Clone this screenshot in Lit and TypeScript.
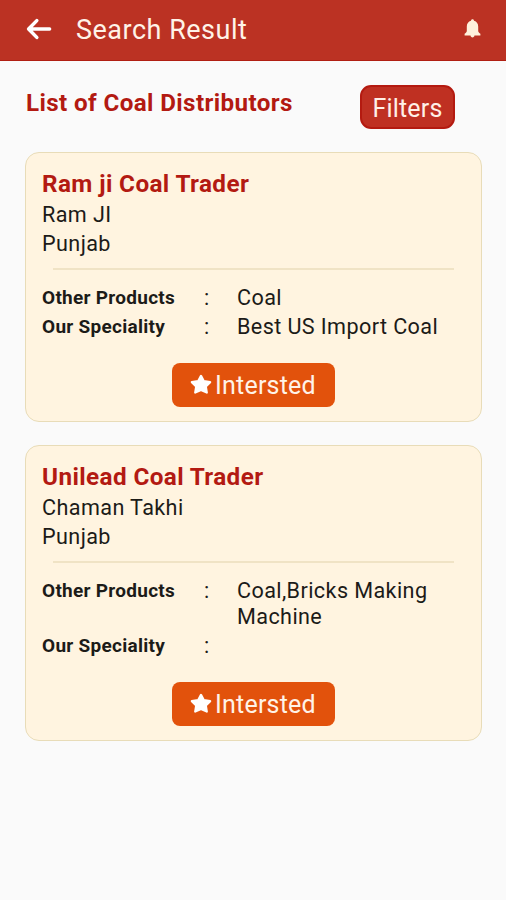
import { LitElement, html, css, svg } from "lit";
import { customElement, property } from "lit/decorators.js";

interface Distributor {
  company: string;
  contact: string;
  region: string;
  products: string;
  speciality: string;
}

const distributors: Distributor[] = [
  {
    company: "Ram ji Coal Trader",
    contact: "Ram JI",
    region: "Punjab",
    products: "Coal",
    speciality: "Best US Import Coal",
  },
  {
    company: "Unilead Coal Trader",
    contact: "Chaman Takhi",
    region: "Punjab",
    products: "Coal,Bricks Making Machine",
    speciality: "",
  },
];

const backIcon = svg`<path d="M11.8 2.6 L3.6 11 L11.8 19.4 M3.8 11 H24.6" fill="none" stroke="currentColor" stroke-width="3.5" stroke-linecap="round" stroke-linejoin="round"/>`;
const bellIcon = svg`<path d="M8.5 0.3 C9.4 0.3 10 0.9 10 1.8 C12.8 2.6 14.2 4.9 14.2 7.6 V12 C14.2 13.2 15.4 13.9 16.4 14.8 V16.4 H0.6 V14.8 C1.6 13.9 2.8 13.2 2.8 12 V7.6 C2.8 4.9 4.2 2.6 7 1.8 C7 0.9 7.6 0.3 8.5 0.3 Z M6.5 16.2 H10.5 C10.5 17.6 9.6 18.4 8.5 18.4 C7.4 18.4 6.5 17.6 6.5 16.2 Z" fill="currentColor"/>`;
const starIcon = svg`<path d="M11 1.9 L13.9 7.2 L20.2 8.1 L15.8 12.5 L16.8 18.6 L11 15.9 L5.2 18.6 L6.2 12.5 L1.8 8.1 L8.1 7.2 Z" fill="currentColor" stroke="currentColor" stroke-width="2.2" stroke-linejoin="round"/>`;

@customElement("distributor-card")
export class DistributorCard extends LitElement {
  @property({ attribute: false }) item!: Distributor;

  static styles = css`
    :host {
      display: block;
      box-sizing: border-box;
      padding: 17px 17px 14px 16px;
      border: 1px solid #e8dcb8;
      border-radius: 14px;
      background: #fff4e0;
      color: #1c1b18;
      font-size: 21.6px;
      line-height: 25.4px;
      letter-spacing: 0.4px;
    }
    .company {
      margin: 0 0 2px;
      color: #b31a12;
      font-size: 24.3px;
      font-weight: 700;
      line-height: 28px;
      letter-spacing: 0.38px;
    }
    .line {
      line-height: 29px;
    }
    .divider {
      height: 2px;
      margin: 10px 10px 15px 11px;
      background: #f0e3c5;
    }
    .row {
      display: grid;
      grid-template-columns: 162px 33px 1fr;
      min-height: 25.4px;
      margin-bottom: 3.5px;
    }
    .label {
      font-size: 19px;
      font-weight: 700;
      letter-spacing: 0.28px;
    }
    .action {
      display: flex;
      align-items: center;
      justify-content: center;
      gap: 3px;
      box-sizing: border-box;
      width: 163px;
      height: 44px;
      margin: 23.5px auto 0;
      padding: 2px 0 0;
      border: 0;
      border-radius: 8px;
      background: #e2520c;
      color: #fff3e8;
      font: 400 25px/30px Roboto, sans-serif;
      letter-spacing: 0.2px;
    }
    .star {
      width: 22px;
      height: 21px;
      margin-top: -2px;
      color: #fff;
    }
  `;

  render() {
    const { company, contact, region, products, speciality } = this.item;
    return html`
      <h2 class="company">${company}</h2>
      <div class="line">${contact}</div>
      <div class="line">${region}</div>
      <div class="divider"></div>
      <div class="row"><span class="label">Other Products</span><span>:</span><span>${products}</span></div>
      <div class="row"><span class="label">Our Speciality</span><span>:</span><span>${speciality}</span></div>
      <button class="action"><svg class="star" viewBox="0 0 22 21">${starIcon}</svg><span>Intersted</span></button>
    `;
  }
}

@customElement("app-root")
export class AppRoot extends LitElement {
  static styles = css`
    :host {
      display: block;
      min-height: 900px;
      background: #fafafa;
      font-family: Roboto, sans-serif;
    }
    .bar {
      display: flex;
      align-items: center;
      box-sizing: border-box;
      height: 61px;
      padding: 0 25px 2px 25px;
      border-bottom: 1px solid #b01f12;
      background: #bb3223;
      color: #fff3e8;
    }
    .back {
      width: 27px;
      height: 22px;
      margin-top: -1px;
      color: #fff;
    }
    .heading {
      flex: 1;
      margin: 2px 0 0 24px;
      font-size: 27px;
      font-weight: 400;
      line-height: 32px;
      letter-spacing: 0.5px;
    }
    .bell {
      width: 17px;
      height: 19px;
      margin-top: -1px;
      color: #fff1dc;
    }
    .top {
      display: flex;
      justify-content: space-between;
      align-items: flex-start;
      padding: 24px 51px 0 26px;
    }
    .title {
      margin: 4px 0 0;
      color: #b31a12;
      font-size: 24.2px;
      font-weight: 700;
      line-height: 28px;
      letter-spacing: 0.38px;
    }
    .filters {
      box-sizing: border-box;
      width: 95px;
      height: 44px;
      padding: 3px 0 0;
      border: 2px solid #b41a10;
      border-radius: 11px;
      background: #bf3022;
      color: #fff0e8;
      font: 400 25px/30px Roboto, sans-serif;
      letter-spacing: 0.2px;
    }
    .list {
      display: flex;
      flex-direction: column;
      gap: 23.5px;
      padding: 23px 24px 0 25px;
    }
  `;

  render() {
    return html`
      <header class="bar">
        <svg class="back" viewBox="0 0 27 22">${backIcon}</svg>
        <h1 class="heading">Search Result</h1>
        <svg class="bell" viewBox="0 0 17 19">${bellIcon}</svg>
      </header>
      <div class="top">
        <h2 class="title">List of Coal Distributors</h2>
        <button class="filters">Filters</button>
      </div>
      <main class="list">
        ${distributors.map((d) => html`<distributor-card .item=${d}></distributor-card>`)}
      </main>
    `;
  }
}
